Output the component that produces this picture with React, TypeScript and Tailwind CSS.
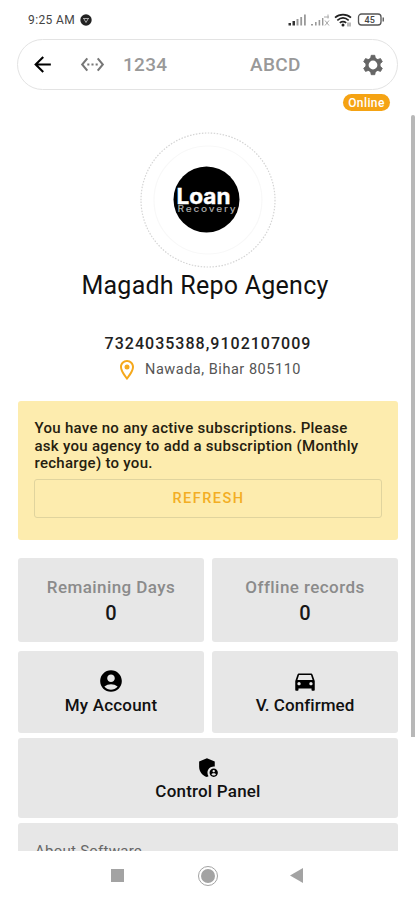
import type { ReactNode } from 'react';
import {
  MdAccountCircle,
  MdAdminPanelSettings,
  MdArrowBack,
  MdDirectionsCar,
  MdOutlineLocationOn,
  MdSettingsEthernet,
} from 'react-icons/md';

function StatusBar() {
  return (
    <div className="flex h-[39px] items-center justify-between pl-[28px] pr-[29px]">
      <div className="flex items-center gap-[5px] text-[12px] text-[#444]">
        <span className="tracking-[0.4px]">9:25 AM</span>
        <svg width="12" height="12" viewBox="0 0 12 12">
          <circle cx="6" cy="6" r="5.700" fill="#222" />
          <path d="M3 4.500h6M4 5l2 3.500L8 5" stroke="#aaa" strokeWidth="1" fill="none" />
        </svg>
      </div>
      <svg width="98" height="16" viewBox="0 0 98 16">
        <g transform="translate(0 -1)">
          <g fill="#333">
            <rect x="0.500" y="12" width="2.500" height="2.500" />
            <rect x="4.500" y="10" width="2.500" height="4.500" />
          </g>
          <g fill="#999">
            <rect x="8.500" y="8" width="2" height="6.500" />
            <rect x="12.300" y="6" width="1.800" height="8.500" />
            <rect x="16" y="3.500" width="1.800" height="11" />
            <rect x="23" y="13" width="2" height="1.500" />
            <rect x="27" y="11" width="1.600" height="3.500" />
            <rect x="30.600" y="9" width="1.600" height="5.500" />
            <rect x="34" y="7" width="1.400" height="7.500" />
          </g>
          <path d="M37 9.500l4 5M41 9.500l-4 5M36 6h5M40 3.500v4" stroke="#aaa" strokeWidth="1" fill="none" />
          <g fill="none" stroke="#222" strokeWidth="1.700">
            <path d="M47 6.700c4.600-4 11.400-4 16 0" />
            <path d="M49.300 9.300c3.500-2.900 7.900-2.900 11.400 0" />
            <path d="M51.800 11.800c2-1.600 4.400-1.600 6.400 0" />
          </g>
          <circle cx="55" cy="14" r="1.500" fill="#222" />
          <path d="M60 11.500v4m2-4v4" stroke="#777" strokeWidth="1" />
        </g>
        <rect x="70.500" y="2" width="22.500" height="11" rx="3" fill="none" stroke="#555" strokeWidth="1.300" />
        <rect x="94.500" y="5.500" width="1.500" height="4" fill="#666" />
        <text x="81.700" y="10.800" textAnchor="middle" fontSize="9" fontWeight="500" fill="#444">45</text>
      </svg>
    </div>
  );
}

const TEETH = [0, 60, 120, 180, 240, 300];

function GearIcon() {
  return (
    <svg className="ml-auto" width="22" height="22" viewBox="0 0 22 22">
      <circle cx="11" cy="11" r="6" fill="none" stroke="#666" strokeWidth="3.200" />
      {TEETH.map((angle) => (
        <path key={angle} d="M8.600 4.500L9.200 1.300h3.600l.6 3.200z" fill="#666" stroke="#666" strokeWidth="0.800" strokeLinejoin="round" transform={`rotate(${angle} 11 11)`} />
      ))}
    </svg>
  );
}

function SearchBar() {
  return (
    <div className="mx-[17px] flex h-[51px] shrink-0 items-center rounded-full border-[1.5px] border-[#e3e3e3] pl-[12px] pr-[13px] text-[19px] font-medium text-[#999]">
      <MdArrowBack className="size-[25px] text-black" />
      <MdSettingsEthernet className="ml-[25px] size-[25px] text-[#777]" />
      <span className="ml-[18px] mt-[2px] w-[127px] tracking-[0.3px]">1234</span>
      <span className="mt-[2px] tracking-[0.3px]">ABCD</span>
      <GearIcon />
    </div>
  );
}

function Profile() {
  return (
    <div className="flex flex-col items-center">
      <svg className="mt-[21px]" width="136" height="136" viewBox="0 0 136 136">
        <circle cx="68" cy="68" r="67" fill="none" stroke="#d4d4d4" strokeWidth="1.200" strokeDasharray="1.500 1.500" />
        <circle cx="68" cy="68" r="54" fill="none" stroke="#f8f8f8" strokeWidth="1.200" />
        <circle cx="66.500" cy="67.500" r="33" fill="#000" />
        <text x="36.500" y="71.500" fontFamily="Inter, sans-serif" fontSize="21.500" fontWeight="700" fill="#fff" stroke="#fff" strokeWidth="0.400" textLength="54" lengthAdjust="spacingAndGlyphs">Loan</text>
        <text x="37.500" y="79.500" fontFamily="Inter, sans-serif" fontSize="8.500" fontWeight="500" letterSpacing="1.500" fill="#aaa" textLength="60" lengthAdjust="spacingAndGlyphs">Recovery</text>
      </svg>
      <h1 className="mt-[3px] pr-[6px] text-[25px] leading-[30px] tracking-[0.25px] text-[#111]">Magadh Repo Agency</h1>
      <p className="mt-[33px] text-[16px] font-medium leading-[20px] tracking-[1.02px] text-[#222]">7324035388,9102107009</p>
      <div className="mt-[5px] flex h-[22px] items-center gap-[6px] text-[14.5px] tracking-[0.53px] text-[#555]">
        <MdOutlineLocationOn className="size-[24px] text-[#f5a81c]" />
        <span>Nawada, Bihar 805110</span>
      </div>
    </div>
  );
}

function Notice() {
  return (
    <div className="mt-[20px] h-[139px] rounded-[3px] bg-[#fdecae] px-[16px] pt-[19px]">
      <p className="whitespace-nowrap pl-[0.5px] text-[15px] font-medium leading-[17.6px] tracking-[0.28px] text-[#25200f]">
        You have no any active subscriptions. Please
        <br />
        ask you agency to add a subscription (Monthly
        <br />
        recharge) to you.
      </p>
      <button className="mt-[6px] flex h-[39px] w-full items-center justify-center rounded-[3px] border border-[#e0d49e] pl-px pt-[2px] text-[14.5px] font-medium tracking-[1.5px] text-[#f3ae24]">
        REFRESH
      </button>
    </div>
  );
}

function Stat({ label }: { label: string }) {
  return (
    <div className="flex h-[84px] flex-col items-center rounded-[3px] bg-[#e7e7e7] pt-[18px]">
      <span className="text-[17px] font-medium leading-[22px] tracking-[0.43px] text-[#8b8b8b]">{label}</span>
      <span className="mt-[2px] text-[20px] font-medium leading-[26px] text-[#171717]">0</span>
    </div>
  );
}

function Action({ icon, label, className }: { icon: ReactNode; label: string; className: string }) {
  return (
    <div className={`flex flex-col items-center rounded-[3px] bg-[#e7e7e7] text-[17px] font-medium text-[#111] ${className}`}>
      {icon}
      <span className="leading-[22px]">{label}</span>
    </div>
  );
}

export default function App() {
  return (
    <div className="h-[900px] w-[415px] overflow-hidden bg-white font-['Roboto',sans-serif]">
      <StatusBar />
      <SearchBar />
      <div className="flex h-[761px] justify-between overflow-hidden">
        <main className="ml-[18px] w-[380px]">
          <div className="flex justify-end pr-[8px] pt-[4px]">
            <span className="flex h-[17px] w-[47px] items-center justify-center rounded-full bg-[#f5a313] pt-px text-[12px] font-medium tracking-[0.4px] text-white">
              Online
            </span>
          </div>
          <Profile />
          <Notice />
          <div className="mt-[18px] grid grid-cols-[186px_186px] gap-x-[8px] gap-y-[9px]">
            <Stat label="Remaining Days" />
            <Stat label="Offline records" />
            <Action className="h-[82px] pt-[17px] tracking-[0.2px]" icon={<MdAccountCircle className="size-[26px] text-black" />} label="My Account" />
            <Action className="h-[82px] pt-[17px] tracking-[0.05px]" icon={<MdDirectionsCar className="size-[26px] text-black" />} label="V. Confirmed" />
          </div>
          <Action className="mt-[5px] h-[80px] pt-[17px] tracking-[0.2px]" icon={<MdAdminPanelSettings className="size-[25px] text-black" />} label="Control Panel" />
          <div className="mt-[5px] h-[60px] rounded-t-[3px] bg-[#e7e7e7] pl-[17px] pt-[18px] text-[15px] leading-[20px] tracking-[0.25px] text-[#666]">
            About Software
          </div>
        </main>
        <div className="mt-[25px] h-[622px] w-[4px] rounded-t-[2px] bg-[#b8b8b8]" />
      </div>
      <div className="flex h-[49px] items-center pl-[111px]">
        <div className="size-[13px] bg-[#a3a3a3]" />
        <div className="ml-[74px] flex size-[20px] items-center justify-center rounded-full border-[1.5px] border-[#a3a3a3]">
          <div className="size-[14px] rounded-full bg-[#a3a3a3]" />
        </div>
        <svg className="ml-[72px]" width="13" height="15" viewBox="0 0 13 15">
          <path d="M13 0v15L0 7.500z" fill="#a3a3a3" />
        </svg>
      </div>
    </div>
  );
}
